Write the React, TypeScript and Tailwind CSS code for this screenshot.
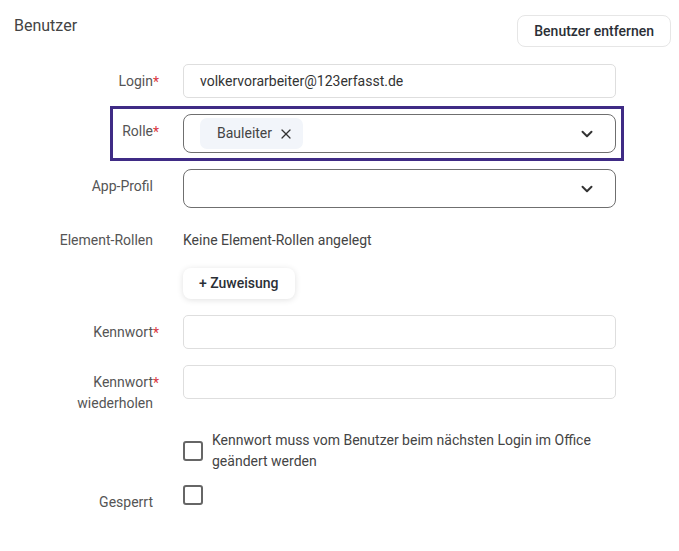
import React from "react";
import { ChevronDown, X } from "lucide-react";

const Label = ({ text, required, extra }: { text: string; required?: boolean; extra?: string }) => (
  <div className="w-[153px] shrink-0 pt-[7px] text-right text-[14px] leading-[21px] text-[#555]">
    <span className="relative">
      {text}
      {required && <span className="absolute left-full top-[-1px] text-[#d9363e]">*</span>}
    </span>
    {extra && <div>{extra}</div>}
  </div>
);

const TextInput = ({ value }: { value?: string }) => (
  <div className="flex h-[34px] w-[433px] items-center rounded-[5px] border border-[#dedede] bg-white px-4 text-[14px] text-[#333]">
    {value}
  </div>
);

const Checkbox = () => (
  <span className="block h-[20px] w-[20px] shrink-0 rounded-[3px] border-2 border-[#666] bg-white" />
);

export default function App() {
  return (
    <div className="min-h-screen bg-white font-['Roboto',sans-serif] text-[14px]">
      {/* header */}
      <div className="flex items-start justify-between pl-[14px] pr-[8px] pt-[15px]">
        <h2 className="text-[16px] leading-[21px] text-[#444]">Benutzer</h2>
        <button className="h-[32px] rounded-[8px] border border-[#e6e6e6] bg-white px-[16px] text-[14px] font-medium text-[#2b2f36]">
          Benutzer entfernen
        </button>
      </div>

      <div className="mt-[17px] flex flex-col gap-4">
        <div className="flex items-start gap-[30px]">
          <Label text="Login" required />
          <TextInput value="volkervorarbeiter@123erfasst.de" />
        </div>

        {/* focused row */}
        <div className="relative flex items-start gap-[30px]">
          <span className="pointer-events-none absolute bottom-[-8px] left-[110px] top-[-8px] w-[514px] border-[3px] border-[#3f2b85]" />
          <Label text="Rolle" required />
          <div className="flex h-[39px] w-[433px] items-center justify-between rounded-[8px] border border-[#6f6f6f] bg-white pl-4 pr-[19px]">
            <span className="flex h-[31px] items-center gap-[6px] rounded-[7px] bg-[#f2f5fa] pl-[17px] pr-[9px] text-[14px] text-[#444]">
              Bauleiter
              <X size={16} strokeWidth={1.8} className="text-[#333]" />
            </span>
            <ChevronDown size={18} strokeWidth={2.6} className="text-[#333]" />
          </div>
        </div>

        <div className="flex items-start gap-[30px]">
          <Label text="App-Profil" />
          <div className="flex h-[39px] w-[433px] items-center justify-end rounded-[8px] border border-[#6f6f6f] bg-white pr-[19px]">
            <ChevronDown size={18} strokeWidth={2.6} className="text-[#333]" />
          </div>
        </div>

        <div className="mt-[6px] flex items-start gap-[30px]">
          <div className="w-[153px] shrink-0 text-right text-[14px] leading-[21px] text-[#555]">Element-Rollen</div>
          <div className="text-[14px] leading-[21px] text-[#444]">Keine Element-Rollen angelegt</div>
        </div>

        <div className="pl-[183px] pt-[1px]">
          <button className="h-[31px] rounded-[8px] bg-white px-[16px] text-[14px] font-medium text-[#2b2f36] shadow-[0_1px_6px_rgba(0,0,0,0.12)]">
            + Zuweisung
          </button>
        </div>

        <div className="flex items-start gap-[30px]">
          <Label text="Kennwort" required />
          <TextInput />
        </div>

        <div className="flex items-start gap-[30px]">
          <Label text="Kennwort" required extra="wiederholen" />
          <TextInput />
        </div>

        <div className="flex items-center gap-[9px] pl-[183px]">
          <Checkbox />
          <span className="text-[14px] leading-[21px] text-[#444]">
            Kennwort muss vom Benutzer beim nächsten Login im Office
            <br />
            geändert werden
          </span>
        </div>

        <div className="mt-[-3px] flex items-start gap-[30px]">
          <Label text="Gesperrt" />
          <Checkbox />
        </div>
      </div>
    </div>
  );
}
